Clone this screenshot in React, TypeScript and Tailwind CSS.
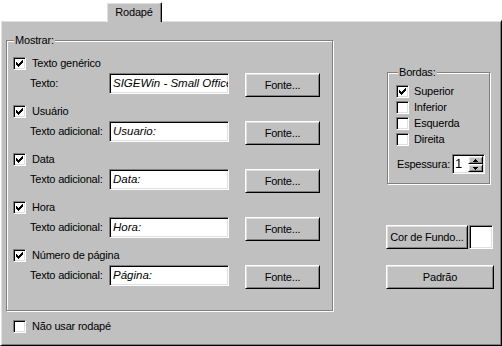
const raised =
  "border border-t-white border-l-white border-r-black border-b-black shadow-[inset_1px_1px_0_#dfdfdf,inset_-1px_-1px_0_#808080] bg-[#c0c0c0]";
const sunken =
  "border border-t-[#808080] border-l-[#808080] border-r-white border-b-white shadow-[inset_1px_1px_0_#000,inset_-1px_-1px_0_#dfdfdf] bg-white";
const etched = "relative border border-[#808080] shadow-[inset_1px_1px_0_#fff,1px_1px_0_#fff]";

function Tick() {
  return (
    <svg width="7" height="7" viewBox="0 0 7 7" shapeRendering="crispEdges">
      <path d="M0 2V5H1V6H2V7H3V6H4V5H5V4H6V3H7V0H6V1H5V2H4V3H3V4H2V3H1V2Z" fill="#000" />
    </svg>
  );
}

function Check({ label, checked, gap = "gap-[6px]" }: { label: string; checked?: boolean; gap?: string }) {
  return (
    <div className={`flex h-[13px] items-center ${gap}`}>
      <div className={`flex h-[13px] w-[13px] shrink-0 items-center justify-center ${sunken}`}>
        {checked && <Tick />}
      </div>
      <span className="leading-[13px] whitespace-nowrap">{label}</span>
    </div>
  );
}

function Btn({ className, children }: { className: string; children: React.ReactNode }) {
  return (
    <div className={`flex h-[24px] items-center justify-center leading-[13px] ${raised} ${className}`}>
      {children}
    </div>
  );
}

function Section({ title, label, value }: { title: string; label: string; value: string }) {
  return (
    <div className="h-[48px]">
      <Check label={title} checked />
      <div className="mt-[3px] flex items-start pl-[17px]">
        <span className="w-[79px] leading-[21px] whitespace-nowrap">{label}</span>
        <div
          className={`h-[21px] w-[120px] overflow-hidden pl-[3px] text-[11.5px] italic leading-[19px] tracking-normal whitespace-nowrap ${sunken}`}
        >
          {value}
        </div>
        <Btn className="ml-[16px] w-[75px]">Fonte...</Btn>
      </div>
    </div>
  );
}

function Arrow({ up }: { up?: boolean }) {
  return (
    <svg width="5" height="3" viewBox="0 0 5 3" shapeRendering="crispEdges">
      <path d={up ? "M2 0H3V1H4V2H5V3H0V2H1V1H2Z" : "M0 0H5V1H4V2H3V3H2V2H1V1H0Z"} fill="#000" />
    </svg>
  );
}

export default function App() {
  return (
    <div className="h-[346px] w-[502px] overflow-hidden bg-white font-['Liberation_Sans',Arial,sans-serif] text-[11px] tracking-[-0.2px] text-black">
      <div className="flex h-[20px] pl-[106px] pt-[2px]">
        <div className="relative z-10 flex h-[20px] w-[56px] items-start justify-center rounded-t-[2px] border-t border-l border-r border-t-white border-l-white border-r-black bg-[#c0c0c0] pt-[3px] shadow-[inset_-1px_0_0_#808080,inset_1px_1px_0_#dfdfdf]">
          <span className="leading-[13px]">Rodapé</span>
        </div>
      </div>

      <div className={`flex h-[326px] pl-[5px] pt-[19px] ${raised}`}>
        <div className="flex flex-col">
          <div className={`h-[271px] w-[327px] pl-[6px] pt-[16px] ${etched}`}>
            <span className="absolute -top-[7px] left-[7px] bg-[#c0c0c0] px-[1px] leading-[13px]">Mostrar:</span>
            <Section title="Texto genérico" label="Texto:" value="SIGEWin - Small Office" />
            <Section title="Usuário" label="Texto adicional:" value="Usuario:" />
            <Section title="Data" label="Texto adicional:" value="Data:" />
            <Section title="Hora" label="Texto adicional:" value="Hora:" />
            <Section title="Número de página" label="Texto adicional:" value="Página:" />
          </div>
          <div className="ml-[7px] mt-[9px]">
            <Check label="Não usar rodapé" />
          </div>
        </div>

        <div className="ml-[53px] flex flex-col">
          <div className={`ml-[1px] mt-[32px] h-[112px] w-[103px] pl-[8px] pt-[12px] ${etched}`}>
            <span className="absolute -top-[7px] left-[10px] bg-[#c0c0c0] px-[1px] leading-[13px]">Bordas:</span>
            <div className="flex flex-col gap-[3px]">
              <Check label="Superior" checked gap="gap-[5px]" />
              <Check label="Inferior" gap="gap-[5px]" />
              <Check label="Esquerda" gap="gap-[5px]" />
              <Check label="Direita" gap="gap-[5px]" />
            </div>
            <div className="ml-[1px] mt-[8px] flex items-center">
              <span className="w-[55px] leading-[13px]">Espessura:</span>
              <div className={`flex h-[20px] w-[33px] ${sunken}`}>
                <span className="flex-1 pl-[2px] text-[13px] leading-[18px]">1</span>
                <div className="flex flex-col py-[1px] pr-[1px]">
                  <div className={`flex h-[8px] w-[15px] items-center justify-center ${raised}`}>
                    <Arrow up />
                  </div>
                  <div className={`flex h-[8px] w-[15px] items-center justify-center ${raised}`}>
                    <Arrow />
                  </div>
                </div>
              </div>
            </div>
          </div>

          <div className="mt-[41px] flex">
            <Btn className="w-[82px]">Cor de Fundo...</Btn>
            <div className={`ml-[1px] h-[24px] w-[24px] ${sunken}`} />
          </div>
          <Btn className="mt-[16px] w-[108px]">Padrão</Btn>
        </div>
      </div>
    </div>
  );
}
